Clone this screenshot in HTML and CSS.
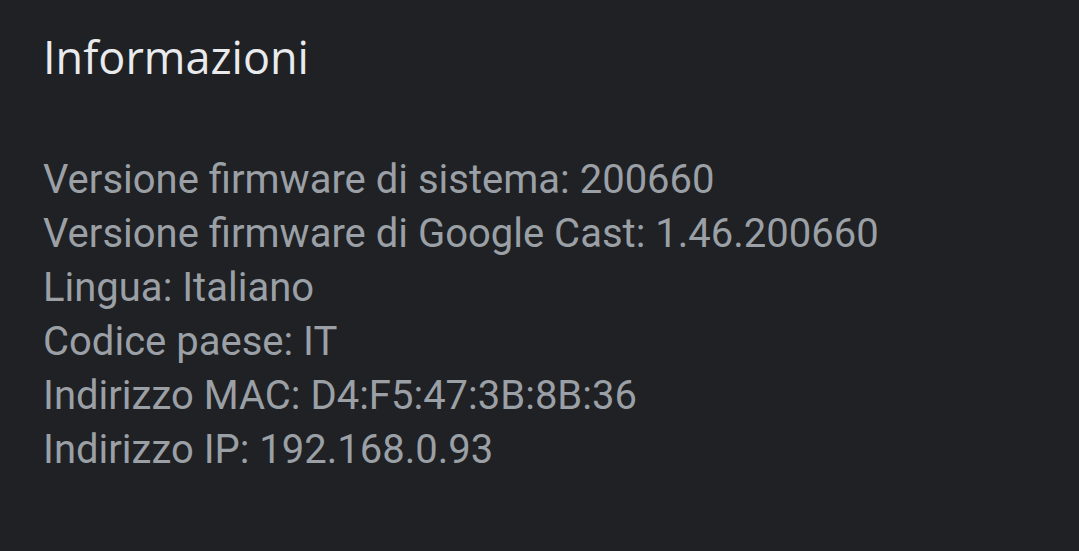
FILE: index.html
```html
<!DOCTYPE html>
<html lang="it">
<head>
<meta charset="utf-8">
<link rel="stylesheet" href="styles.css">
</head>
<body>
<main class="panel">
  <h1 class="title">Informazioni</h1>
  <ul class="info">
    <li>Versione firmware di sistema: 200660</li>
    <li>Versione firmware di Google Cast: 1.46.200660</li>
    <li>Lingua: Italiano</li>
    <li>Codice paese: IT</li>
    <li>Indirizzo MAC: D4:F5:47:3B:8B:36</li>
    <li>Indirizzo IP: 192.168.0.93</li>
  </ul>
</main>
</body>
</html>
```
FILE: styles.css
```css
html, body {
  margin: 0;
  padding: 0;
  background: #202124;
  height: 100%;
}
.panel {
  padding: 26px 43px 0;
}
.title {
  margin: 0;
  font-family: "Open Sans", sans-serif;
  font-weight: 500;
  font-size: 45px;
  line-height: 62px;
  color: #e8eaed;
}
.info {
  list-style: none;
  margin: 65px 0 0;
  padding: 0;
  font-family: Roboto, sans-serif;
  font-size: 40px;
  line-height: 54px;
  color: #9aa0a6;
}
```
